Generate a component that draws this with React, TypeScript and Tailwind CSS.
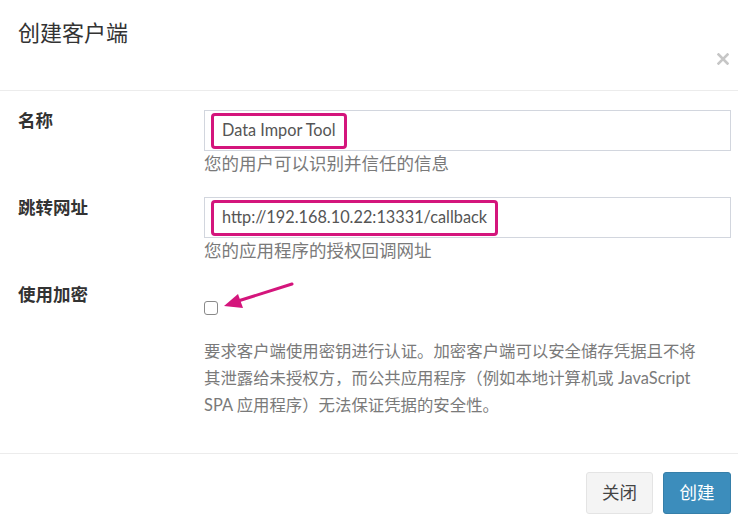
import React from "react";

const Field = ({
  label,
  value,
  help,
}: {
  label: string;
  value: string;
  help: string;
}) => (
  <div className="grid grid-cols-[186px_1fr] mb-[20px]">
    <label className="font-bold text-[#333] leading-[24px] -mt-[1px]">{label}</label>
    <div className="flex flex-col">
      <div className="h-[41px] border border-[#d2d6de] flex items-center pl-[6px]">
        <span className="h-[36px] flex items-center border-[3px] border-[#d4157c] rounded-[4px] px-[8px] text-[#555] text-[16.3px]">
          {value}
        </span>
      </div>
      <p className="text-[#7a7a7a] leading-[26px]">{help}</p>
    </div>
  </div>
);

export default function App() {
  return (
    <div className="relative w-[738px] h-[514px] overflow-hidden bg-white font-['Lato','Noto_Sans_CJK_SC',sans-serif] text-[17.5px]">
      <div className="h-[91px] border-b border-[#ececec] pl-[18px] pr-[9px] flex justify-between">
        <h4 className="text-[22px] leading-[30px] text-[#333] mt-[18px]">创建客户端</h4>
        <button className="mt-[53px] self-start w-[12px] h-[12px]">
          <svg width="12" height="12" viewBox="0 0 12 12">
            <path d="M1.5 1.5 L10.5 10.5 M10.5 1.5 L1.5 10.5" stroke="#c6c6c6" strokeWidth="2.6" strokeLinecap="square" />
          </svg>
        </button>
      </div>

      <div className="pl-[18px] pr-[7px] pt-[19px] h-[363px] border-b border-[#ececec]">
        <Field label="名称" value="Data Impor Tool" help="您的用户可以识别并信任的信息" />
        <Field
          label="跳转网址"
          value="http://192.168.10.22:13331/callback"
          help="您的应用程序的授权回调网址"
        />
        <div className="grid grid-cols-[186px_1fr]">
          <label className="font-bold text-[#333] leading-[24px] -mt-[1px]">使用加密</label>
          <div className="flex flex-col">
            <input
              type="checkbox"
              className="appearance-none w-[14px] h-[14px] border-[1.5px] border-[#8a8a8a] rounded-[3px] mt-[17px]"
            />
            <p className="w-[500px] mt-[22px] text-[16.4px] leading-[27px] text-[#7a7a7a]">
              要求客户端使用密钥进行认证。加密客户端可以安全储存凭据且不将其泄露给未授权方，而公共应用程序（例如本地计算机或 JavaScript SPA 应用程序）无法保证凭据的安全性。
            </p>
          </div>
        </div>
      </div>

      <div className="flex justify-end gap-[10px] pr-[7px] pt-[18px]">
        <button className="w-[67px] h-[42px] rounded-[3px] bg-[#f4f4f4] border border-[#e4e4e4] text-[#444]">
          关闭
        </button>
        <button className="w-[68px] h-[42px] rounded-[3px] bg-[#3c8dbc] border border-[#367fa9] text-white">
          创建
        </button>
      </div>

      <svg className="absolute left-0 top-0 pointer-events-none" width="738" height="514">
        <line x1="292" y1="284" x2="238" y2="301" stroke="#d4157c" strokeWidth="3" strokeLinecap="round" />
        <polygon points="224,306 238,294 243,308" fill="#d4157c" />
      </svg>
    </div>
  );
}
